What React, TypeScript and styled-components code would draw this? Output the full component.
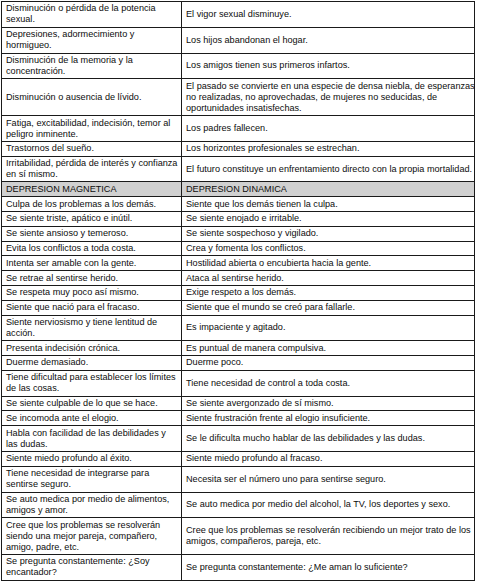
import React, { FC } from 'react';
import styled, { createGlobalStyle } from 'styled-components';

const GlobalStyle = createGlobalStyle`
  html, body {
    margin: 0;
    padding: 0;
    background: #ffffff;
  }
`;

const Page = styled.div`
  padding: 1px 0 0 1px;
`;

const Table = styled.table`
  width: 474px;
  border-collapse: collapse;
  table-layout: fixed;
  font-family: 'Liberation Sans', Arial, sans-serif;
  font-size: 9.15px;
  line-height: 11px;
  color: #0d0d0d;
`;

const LeftCol = styled.col`
  width: 180px;
`;

interface RowProps {
  $header?: boolean;
}

const Row = styled.tr<RowProps>`
  background-color: ${ props => props.$header ? '#d0d0d0' : '#ffffff' };
`;

// line breaks follow the source document, so no automatic wrapping
const Cell = styled.td`
  border: 1px solid #1a1a1a;
  padding: 1.4px 1px 1.4px 4px;
  vertical-align: middle;
  white-space: pre;
  overflow: hidden;
`;

type Pair = [string, string];

const symptoms: Pair[] = [
  ['Disminución o pérdida de la potencia\nsexual.', 'El vigor sexual disminuye.'],
  ['Depresiones, adormecimiento y\nhormigueo.', 'Los hijos abandonan el hogar.'],
  ['Disminución de la memoria y la\nconcentración.', 'Los amigos tienen sus primeros infartos.'],
  [
    'Disminución o ausencia de lívido.',
    'El pasado se convierte en una especie de densa niebla, de esperanzas\nno realizadas, no aprovechadas, de mujeres no seducidas, de\noportunidades insatisfechas.',
  ],
  ['Fatiga, excitabilidad, indecisión, temor al\npeligro inminente.', 'Los padres fallecen.'],
  ['Trastornos del sueño.', 'Los horizontes profesionales se estrechan.'],
  ['Irritabilidad, pérdida de interés y confianza\nen sí mismo.', 'El futuro constituye un enfrentamiento directo con la propia mortalidad.'],
];

const comparison: Pair[] = [
  ['Culpa de los problemas a los demás.', 'Siente que los demás tienen la culpa.'],
  ['Se siente triste, apático e inútil.', 'Se siente enojado e irritable.'],
  ['Se siente ansioso y temeroso.', 'Se siente sospechoso y vigilado.'],
  ['Evita los conflictos a toda costa.', 'Crea y fomenta los conflictos.'],
  ['Intenta ser amable con la gente.', 'Hostilidad abierta o encubierta hacia la gente.'],
  ['Se retrae al sentirse herido.', 'Ataca al sentirse herido.'],
  ['Se respeta muy poco así mismo.', 'Exige respeto a los demás.'],
  ['Siente que nació para el fracaso.', 'Siente que el mundo se creó para fallarle.'],
  ['Siente nerviosismo y tiene lentitud de\nacción.', 'Es impaciente y agitado.'],
  ['Presenta indecisión crónica.', 'Es puntual de manera compulsiva.'],
  ['Duerme demasiado.', 'Duerme poco.'],
  ['Tiene dificultad para establecer los límites\nde las cosas.', 'Tiene necesidad de control a toda costa.'],
  ['Se siente culpable de lo que se hace.', 'Se siente avergonzado de sí mismo.'],
  ['Se incomoda ante el elogio.', 'Siente frustración frente al elogio insuficiente.'],
  ['Habla con facilidad de las debilidades y\nlas dudas.', 'Se le dificulta mucho hablar de las debilidades y las dudas.'],
  ['Siente miedo profundo al éxito.', 'Siente miedo profundo al fracaso.'],
  ['Tiene necesidad de integrarse para\nsentirse seguro.', 'Necesita ser el número uno para sentirse seguro.'],
  ['Se auto medica por medio de alimentos,\namigos y amor.', 'Se auto medica por medio del alcohol, la TV, los deportes y sexo.'],
  [
    'Cree que los problemas se resolverán\nsiendo una mejor pareja, compañero,\namigo, padre, etc.',
    'Cree que los problemas se resolverán recibiendo un mejor trato de los\namigos, compañeros, pareja, etc.',
  ],
  ['Se pregunta constantemente: ¿Soy\nencantador?', 'Se pregunta constantemente: ¿Me aman lo suficiente?'],
];

const PairRow: FC<{ pair: Pair; header?: boolean }> = ({ pair, header }) => (
  <Row $header={ header }>
    <Cell>{ pair[0] }</Cell>
    <Cell>{ pair[1] }</Cell>
  </Row>
);

const App: FC = () => (
  <>
    <GlobalStyle />
    <Page>
      <Table>
        <colgroup>
          <LeftCol />
          <col />
        </colgroup>
        <tbody>
          { symptoms.map(p => <PairRow key={ p[0] } pair={ p } />) }
          <PairRow header pair={ ['DEPRESION MAGNETICA', 'DEPRESION DINAMICA'] } />
          { comparison.map(p => <PairRow key={ p[0] } pair={ p } />) }
        </tbody>
      </Table>
    </Page>
  </>
);

export default App;
